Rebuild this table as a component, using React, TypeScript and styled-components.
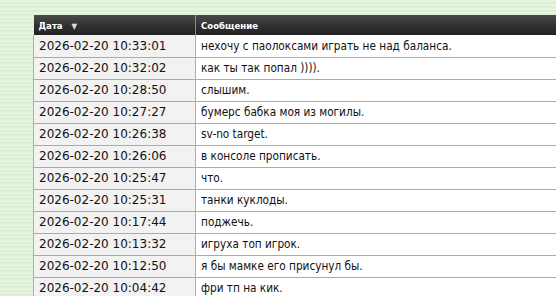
import React from 'react';
import styled, { createGlobalStyle } from 'styled-components';

const GlobalStyle = createGlobalStyle`
  html, body {
    margin: 0;
    padding: 0;
    overflow: hidden;
  }
  body {
    background: repeating-linear-gradient(
      to bottom,
      #e6f5de 0px,
      #e6f5de 2px,
      #ddf0d3 2px,
      #ddf0d3 4px
    );
    font-family: "DejaVu Sans", sans-serif;
  }
`;

const Page = styled.div`
  padding: 15px 0 0 33px;
  height: 296px;
  box-sizing: border-box;
`;

const Table = styled.table`
  border-collapse: collapse;
  width: 540px;
  table-layout: fixed;
  font-family: "DejaVu Sans", sans-serif;
  font-size: 12px;
  color: #111;
`;

const HeadCell = styled.th<{ $width?: number }>`
  ${({ $width }) => ($width ? `width: ${$width}px;` : '')}
  height: 20px;
  padding: 1px 5px 0;
  box-sizing: border-box;
  text-align: left;
  font-family: "DejaVu Sans Condensed", "DejaVu Sans", sans-serif;
  font-stretch: condensed;
  font-weight: bold;
  font-size: 9.5px;
  color: #fff;
  background: linear-gradient(to bottom, #4a4a4a 0%, #2e2e2e 60%, #222 100%);
  border-left: 1px solid #8a8a8a;
  &:first-child {
    border-left: none;
  }
`;

const SortArrow = styled.span`
  font-size: 8px;
  margin-left: 9px;
  color: #ddd;
`;

const Cell = styled.td<{ $date?: boolean }>`
  height: 22px;
  padding: 0 5px;
  box-sizing: border-box;
  white-space: nowrap;
  overflow: hidden;
  font-family: ${({ $date }) =>
    $date ? '"DejaVu Sans", sans-serif' : '"DejaVu Sans Condensed", "DejaVu Sans", sans-serif'};
  font-stretch: ${({ $date }) => ($date ? 'normal' : 'condensed')};
  font-size: ${({ $date }) => ($date ? '12px' : '11.7px')};
  background: ${({ $date }) => ($date ? '#f2f2f2' : '#fff')};
  border-bottom: 1px solid #ababab;
  border-left: 1px solid #ababab;
`;

const rows: [string, string][] = [
  ['2026-02-20 10:33:01', 'нехочу с паолоксами играть не над баланса.'],
  ['2026-02-20 10:32:02', 'как ты так попал )))).'],
  ['2026-02-20 10:28:50', 'слышим.'],
  ['2026-02-20 10:27:27', 'бумерс бабка моя из могилы.'],
  ['2026-02-20 10:26:38', 'sv-no target.'],
  ['2026-02-20 10:26:06', 'в консоле прописать.'],
  ['2026-02-20 10:25:47', 'что.'],
  ['2026-02-20 10:25:31', 'танки куклоды.'],
  ['2026-02-20 10:17:44', 'поджечь.'],
  ['2026-02-20 10:13:32', 'игруха топ игрок.'],
  ['2026-02-20 10:12:50', 'я бы мамке его присунул бы.'],
  ['2026-02-20 10:04:42', 'фри тп на кик.'],
];

const App: React.FC = () => {
  return (
    <Page>
      <GlobalStyle />
      <Table>
        <thead>
          <tr>
            <HeadCell $width={162}>
              Дата<SortArrow>▼</SortArrow>
            </HeadCell>
            <HeadCell>Сообщение</HeadCell>
          </tr>
        </thead>
        <tbody>
          {rows.map(([date, msg]) => (
            <tr key={date}>
              <Cell $date>{date}</Cell>
              <Cell>{msg}</Cell>
            </tr>
          ))}
        </tbody>
      </Table>
    </Page>
  );
};

export default App;
